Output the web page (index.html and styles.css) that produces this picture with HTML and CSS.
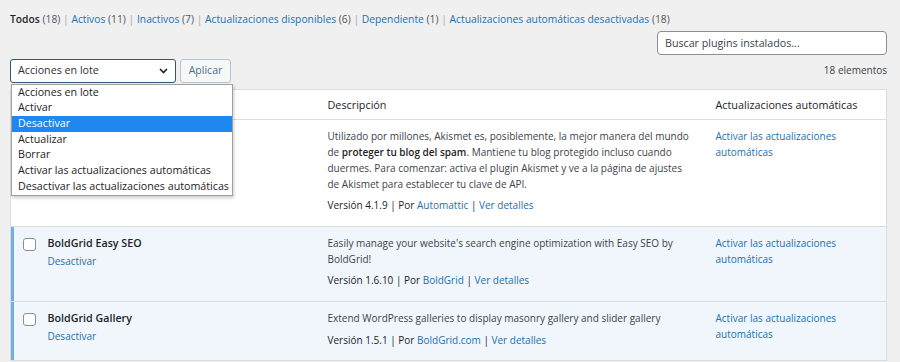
FILE: index.html
```html
<!DOCTYPE html>
<html lang="es">
<head>
    <meta charset="UTF-8">
    <meta name="viewport" content="width=device-width, initial-scale=1.0">
    <title>Plugins</title>
    <link rel="stylesheet" href="styles.css">
</head>
<body>
    <ul class="subsubsub">
        <li><span class="current">Todos</span> <span class="count">(18)</span> <span class="sep">|</span> </li>
        <li><a href="#">Activos</a> <span class="count">(11)</span> <span class="sep">|</span> </li>
        <li><a href="#">Inactivos</a> <span class="count">(7)</span> <span class="sep">|</span> </li>
        <li><a href="#">Actualizaciones disponibles</a> <span class="count">(6)</span> <span class="sep">|</span> </li>
        <li><a href="#">Dependiente</a> <span class="count">(1)</span> <span class="sep">|</span> </li>
        <li><a href="#">Actualizaciones automáticas desactivadas</a> <span class="count">(18)</span></li>
    </ul>

    <div class="search-box">
        <input type="search" placeholder="Buscar plugins instalados...">
    </div>

    <div class="tablenav">
        <div class="bulk">
            <div class="select">
                <span>Acciones en lote</span>
                <svg width="9" height="6" viewBox="0 0 9 6"><path d="M1 1l3.5 3.5L8 1" fill="none" stroke="#1d2327" stroke-width="1.6"/></svg>
            </div>
            <button type="button" class="button">Aplicar</button>
            <ul class="dropdown">
                <li>Acciones en lote</li>
                <li>Activar</li>
                <li class="selected">Desactivar</li>
                <li>Actualizar</li>
                <li>Borrar</li>
                <li>Activar las actualizaciones automáticas</li>
                <li>Desactivar las actualizaciones automáticas</li>
            </ul>
        </div>
        <span class="items">18 elementos</span>
    </div>

    <table class="plugins">
        <colgroup>
            <col class="col-check">
            <col class="col-name">
            <col class="col-desc">
            <col class="col-auto">
        </colgroup>
        <thead>
            <tr>
                <th><span class="checkbox"></span></th>
                <th>Plugin</th>
                <th>Descripción</th>
                <th>Actualizaciones automáticas</th>
            </tr>
        </thead>
        <tbody>
            <tr>
                <td class="check"><span class="checkbox"></span></td>
                <td class="name"><strong>Akismet Anti-Spam</strong><div class="actions"><a href="#">Activar</a> | <a href="#">Borrar</a></div></td>
                <td class="desc">
                    <p>Utilizado por millones, Akismet es, posiblemente, la mejor manera del mundo<br>de <strong>proteger tu blog del spam</strong>. Mantiene tu blog protegido incluso cuando<br>duermes. Para comenzar: activa el plugin Akismet y ve a la página de ajustes<br>de Akismet para establecer tu clave de API.</p>
                    <div class="meta">Versión 4.1.9 | Por <a href="#">Automattic</a> | <a href="#">Ver detalles</a></div>
                </td>
                <td class="auto"><a href="#">Activar las actualizaciones automáticas</a></td>
            </tr>
            <tr class="active">
                <td class="check"><span class="checkbox"></span></td>
                <td class="name"><strong>BoldGrid Easy SEO</strong><div class="actions"><a href="#">Desactivar</a></div></td>
                <td class="desc">
                    <p>Easily manage your website's search engine optimization with Easy SEO by<br>BoldGrid!</p>
                    <div class="meta">Versión 1.6.10 | Por <a href="#">BoldGrid</a> | <a href="#">Ver detalles</a></div>
                </td>
                <td class="auto"><a href="#">Activar las actualizaciones automáticas</a></td>
            </tr>
            <tr class="active">
                <td class="check"><span class="checkbox"></span></td>
                <td class="name"><strong>BoldGrid Gallery</strong><div class="actions"><a href="#">Desactivar</a></div></td>
                <td class="desc">
                    <p>Extend WordPress galleries to display masonry gallery and slider gallery</p>
                    <div class="meta">Versión 1.5.1 | Por <a href="#">BoldGrid.com</a> | <a href="#">Ver detalles</a></div>
                </td>
                <td class="auto"><a href="#">Activar las actualizaciones automáticas</a></td>
            </tr>
        </tbody>
    </table>
</body>
</html>
```

FILE: styles.css
```css
body {
    margin: 0;
    padding: 0 13px 0 10px;
    background: #f0f0f1;
    color: #3c434a;
    font-family: "Open Sans", "Noto Sans", sans-serif;
    font-size: 10px;
    line-height: 15.7px;
    overflow: hidden;
}

a {
    color: #2271b1;
    text-decoration: none;
}

.subsubsub {
    list-style: none;
    margin: 0;
    padding: 12px 0 0;
    display: flex;
    color: #50575e;
    font-size: 10.3px;
}

.subsubsub li {
    white-space: pre;
}

.subsubsub .current {
    color: #1d2327;
    font-weight: 600;
}

.subsubsub .sep {
    color: #a7aaad;
}

.search-box {
    display: flex;
    justify-content: flex-end;
    margin-top: 3px;
}

.search-box input {
    width: 230px;
    height: 24px;
    box-sizing: border-box;
    border: 1px solid #8c8f94;
    border-radius: 4px;
    padding: 0 7px;
    font: inherit;
    font-size: 10.7px;
    color: #3c434a;
    background: #fff;
}

.search-box input::placeholder {
    color: #3c434a;
}

.tablenav {
    display: flex;
    justify-content: space-between;
    align-items: center;
    margin-top: 4px;
    height: 24px;
}

.bulk {
    position: relative;
    display: flex;
    gap: 4px;
}

.select {
    width: 166px;
    height: 24px;
    box-sizing: border-box;
    border: 1px solid #34546f;
    border-radius: 3px;
    background: #fff;
    display: flex;
    align-items: center;
    justify-content: space-between;
    padding: 0 7px 0 7px;
    color: #2c3338;
    font-size: 10.7px;
}

.button {
    height: 24px;
    width: 51px;
    padding: 0;
    border: 1px solid #b4c4d4;
    border-radius: 3px;
    background: #f6f7f7;
    color: #4a6e92;
    font: inherit;
    font-size: 10.5px;
}

.dropdown {
    position: absolute;
    top: 25px;
    left: 1px;
    z-index: 2;
    width: 222px;
    box-sizing: border-box;
    margin: 0;
    padding: 0;
    list-style: none;
    background: #fff;
    border: 1px solid #a0a0a0;
    box-shadow: 1px 2px 3px rgba(0, 0, 0, 0.2);
    color: #1d2327;
    font-size: 10.7px;
}

.dropdown li {
    height: 15.7px;
    line-height: 15.7px;
    padding-left: 6px;
    white-space: nowrap;
}

.dropdown .selected {
    background: #1e88f0;
    color: #fff;
}

.plugins {
    width: 100%;
    margin-top: 6px;
    border-collapse: collapse;
    table-layout: fixed;
    background: #fff;
    border: 1px solid #dcdcde;
}

.col-check { width: 27px; }
.col-name { width: 280px; }
.col-desc { width: 388px; }

.plugins th {
    text-align: left;
    font-weight: 400;
    font-size: 10.8px;
    color: #1d2327;
    padding: 7px 10px;
    border-bottom: 1px solid #dcdcde;
}

.plugins td {
    vertical-align: top;
    padding: 9px 10px 12px;
    border-bottom: 1px solid #dcdcde;
}

.plugins td.check,
.plugins th:first-child {
    padding: 11px 0 0 12px;
}

.plugins th:first-child {
    padding-top: 2px;
}

.checkbox {
    display: block;
    width: 13px;
    height: 13px;
    box-sizing: border-box;
    border: 1px solid #8c8f94;
    border-radius: 3px;
    background: #fff;
}

.plugins tr.active td {
    background: #f0f6fc;
}

.plugins tr.active td.check {
    box-shadow: inset 3px 0 0 #72aee6;
}

.name strong {
    color: #1d2327;
    font-weight: 600;
    font-size: 10.7px;
}

.actions {
    margin-top: 2px;
}

.desc p {
    margin: 0 0 6px;
}

.desc strong {
    font-weight: 600;
    color: #1d2327;
}

.meta {
    color: #1d2327;
}
```
